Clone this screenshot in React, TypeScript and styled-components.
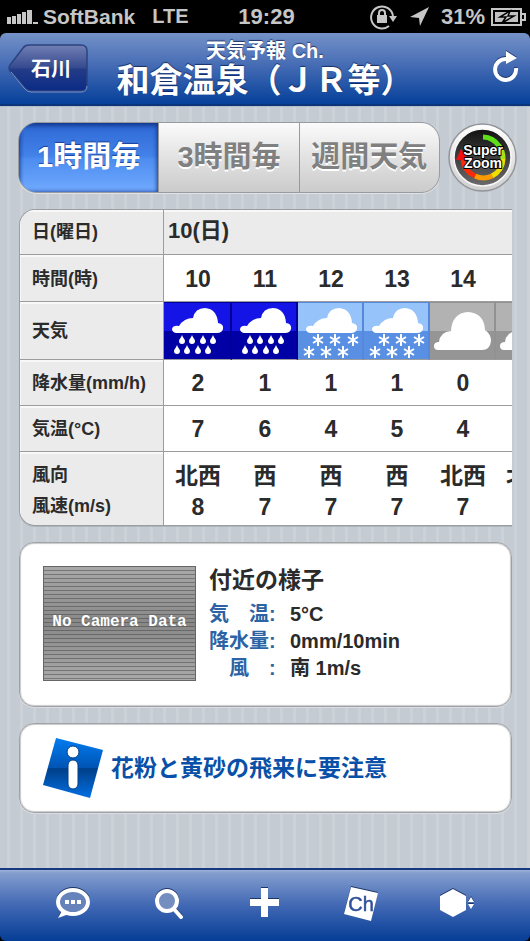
import React, { useState } from "react";
import styled, { createGlobalStyle, css } from "styled-components";

const sans = `"Liberation Sans", "Noto Sans CJK JP", sans-serif`;

const GlobalStyle = createGlobalStyle`
  *, *::before, *::after { box-sizing: border-box; }
  body { margin: 0; background: #000; font-family: ${sans}; color: #2b2b2b; }
  button { font: inherit; color: inherit; border: 0; background: none; padding: 0; cursor: pointer; }
  svg { display: block; }
`;

const Screen = styled.div`
  display: flex;
  flex-direction: column;
  min-height: 100vh;
`;

const StatusBar = styled.div`
  display: grid;
  grid-template-columns: 1fr auto 1fr;
  align-items: center;
  height: 33px;
  padding: 0 4px 0 7px;
  color: #c6c6c6;
  font-size: 22px;
  font-weight: 700;
  line-height: 33px;
`;

const StatusGroup = styled.div<{ $end?: boolean }>`
  display: flex;
  align-items: center;
  justify-content: ${(p) => (p.$end ? "flex-end" : "flex-start")};
`;

const Carrier = styled.span`
  margin: 0 17px 0 5px;
  font-size: 21px;
`;

const Network = styled.span`
  font-size: 20px;
`;

const Percent = styled.span`
  margin: 0 6px 0 12px;
`;

const Rotation = styled.div`
  margin-right: 13px;
`;

const Header = styled.header`
  display: grid;
  grid-template-columns: 80px 1fr 80px;
  align-items: center;
  height: 73px;
  padding: 0 8px;
  border-radius: 6px 6px 0 0;
  border-bottom: 2px solid #0c3478;
  background: linear-gradient(#7592c8, #4068b2 50%, #05409a);
  color: #fff;
  text-shadow: 0 -1px 1px rgba(0, 20, 70, 0.7);
`;

const BackButton = styled.button`
  position: relative;
  width: 80px;
  height: 49px;
  padding-left: 6px;
  font-size: 20px;
  font-weight: 700;
  line-height: 46px;

  svg {
    position: absolute;
    inset: 0;
  }
  span {
    position: relative;
  }
`;

const Titles = styled.div`
  text-align: center;
  white-space: nowrap;
`;

const Channel = styled.div`
  font-size: 20px;
  font-weight: 700;
  line-height: 24px;
`;

const Place = styled.h1`
  display: flex;
  justify-content: center;
  margin: 0;
  font-size: 33px;
  font-weight: 700;
  line-height: 36px;
`;

const RefreshButton = styled.button`
  justify-self: end;
  padding: 0 3px 5px 0;
  filter: drop-shadow(0 -1px 0 rgba(0, 20, 70, 0.6));
`;

const Content = styled.main`
  display: flex;
  flex: 1;
  flex-direction: column;
  gap: 16px;
  padding: 15px 18px 20px;
  border-top: 1px solid #b2bfca;
  background: repeating-linear-gradient(90deg, #c5cbd3 0 7px, #cdd2d9 7px 10px, #c5cbd3 10px 13px);
`;

const Controls = styled.div`
  display: flex;
  align-items: center;
  gap: 8px;
`;

const Segments = styled.div`
  display: flex;
  flex: 1;
  height: 71px;
  overflow: hidden;
  border: 1px solid #989ba0;
  border-radius: 19px;
  background: #999;
  box-shadow: 0 1px 0 #dfe3e8;
`;

const Segment = styled.button<{ $active: boolean }>`
  flex: 1;
  padding-bottom: 7px;
  font-size: 29px;
  font-weight: 700;
  white-space: nowrap;
  & + & {
    border-left: 1px solid #999;
  }
  ${(p) =>
    p.$active
      ? css`
          background: linear-gradient(#2d68d4, #4382e8 48%, #4d8df0 52%, #71aaff);
          box-shadow: inset 0 3px 5px rgba(10, 40, 120, 0.6), inset 0 0 4px rgba(10, 40, 120, 0.8);
          color: #fff;
          text-shadow: 0 -1px 1px rgba(10, 40, 120, 0.7);
        `
      : css`
          background: linear-gradient(#fbfbfb, #e2e2e2 50%, #cbcbcb);
          color: #808080;
          text-shadow: 0 2px 0 #fff;
        `}
`;

const ZoomButton = styled.button`
  width: 69px;
  height: 71px;
  margin-right: -5px;
`;

const TableFrame = styled.div`
  overflow-x: auto;
  overflow-y: hidden;
  scrollbar-width: none;
  margin-left: 1px;
  border: 1px solid #9b9ea1;
  border-right: 0;
  border-radius: 16px 0 0 16px;
  background: #fff;
  box-shadow: 0 1px 0 #b2b5b8;
`;

const Forecast = styled.table`
  width: 542px;
  table-layout: fixed;
  border-collapse: separate;
  border-spacing: 0;

  tr:not(:last-child) > * {
    border-bottom: 1px solid #9c9c9c;
  }
`;

const LabelColumn = styled.col`
  width: 144px;
`;

const HourColumn = styled.col<{ $first: boolean }>`
  width: ${(p) => (p.$first ? 68 : 66)}px;
`;

const Row = styled.tr<{ $height: number }>`
  height: ${(p) => p.$height}px;
`;

const RowLabel = styled.th<{ $top?: number }>`
  padding: ${(p) => p.$top ?? 2}px 0 0 12px;
  border-right: 1px solid #9c9c9c;
  background: #ebebeb;
  box-shadow: inset 1px 2px 0 #f8f8f8;
  font-size: 18px;
  font-weight: 700;
  line-height: 31px;
  text-align: left;
`;

const DateCell = styled.td`
  padding: 0 0 4px 4px;
  background: #ebebeb;
  box-shadow: inset 0 2px 0 #f8f8f8;
  font-size: 22px;
  font-weight: 700;
  line-height: 31px;
`;

const Cell = styled.td<{ $top?: number }>`
  padding: ${(p) => p.$top ?? 2}px 0 0;
  font-size: 23px;
  font-weight: 700;
  line-height: 31px;
  text-align: center;
  white-space: nowrap;
`;

const tones = {
  rain: ["#1414e6", "#0000a4", "#000098"],
  snow: ["#96c3fa", "#5a90e4", "#5588dc"],
  cloud: ["#b2b2b2", "#959595", "#929292"],
};

type Kind = keyof typeof tones;

const WeatherCell = styled.td<{ $kind: Kind }>`
  padding: 0;
  border-top: 1px solid ${(p) => tones[p.$kind][2]};
  border-right: 2px solid ${(p) => tones[p.$kind][2]};
  background: linear-gradient(
    ${(p) => tones[p.$kind][0]} 50%,
    ${(p) => tones[p.$kind][1]} 50%
  );
`;

const Card = styled.section<{ $info?: boolean }>`
  display: flex;
  align-items: ${(p) => (p.$info ? "center" : "flex-start")};
  gap: ${(p) => (p.$info ? 8 : 13)}px;
  min-height: ${(p) => (p.$info ? 90 : 165)}px;
  margin-left: 1px;
  padding: ${(p) => (p.$info ? "0 23px" : "23px")};
  border: 1px solid #9fa2a6;
  border-radius: 15px;
  background: #fff;
  box-shadow: 0 1px 0 #d9dde2, inset 0 0 1px 1px #c9c9c9;
`;

const Camera = styled.div`
  display: grid;
  flex: none;
  place-items: center;
  width: 153px;
  height: 115px;
  padding-bottom: 4px;
  border: 1px solid #666;
  background:
    linear-gradient(transparent 0%, rgba(60, 60, 60, 0.3) 50%, transparent 100%),
    repeating-linear-gradient(#a9a9a9 0 3px, #787878 3px 4px);
  color: #fff;
  font: 700 16px/20px "Liberation Mono", monospace;
  text-shadow: 0 0 2px #666;
`;

const Nearby = styled.div`
  padding-top: 1px;
  font-weight: 700;
`;

const NearbyTitle = styled.h2`
  margin: 0 0 7px;
  font-size: 23px;
  font-weight: 700;
  line-height: 27px;
`;

const Readings = styled.dl`
  display: grid;
  grid-template-columns: 81px auto;
  margin: 0;
  font-size: 20px;
  line-height: 27px;

  dt { color: #2b63a5; white-space: pre; }
  dd { margin: 0; }
`;

const NoticeLink = styled.a`
  color: #0850a8;
  font-size: 23px;
  font-weight: 700;
  line-height: 30px;
  text-decoration: none;
`;

const Toolbar = styled.nav`
  display: flex;
  height: 73px;
  padding: 0 25px 5px;
  border-top: 2px solid #16387f;
  border-radius: 0 0 6px 6px;
  background: linear-gradient(#9db2da 0, #839dce 3px, #4168b4 50%, #053d96);
`;

const ToolButton = styled.button`
  display: grid;
  flex: 1;
  place-items: center;

  svg {
    filter: drop-shadow(0 -1px 0 #1c3565);
  }
`;

const SignalIcon = () => (
  <svg width="31" height="14" viewBox="0 0 31 14" fill="#c6c6c6" aria-hidden="true">
    <path d="M0 7h4v7H0zM5 6h4v8H5zM10 4h4v10h-4zM15 2h4v12h-4zM20 0h5v14h-5zM26 12h5v2h-5z" />
  </svg>
);

const LockIcon = () => (
  <svg width="28" height="26" viewBox="0 0 28 26" fill="none" stroke="#c6c6c6" strokeWidth="2" aria-hidden="true">
    <path d="M20 22A11 11 0 1 1 24 12" />
    <path d="M20 12h8l-4 6z" fill="#c6c6c6" stroke="none" />
    <path d="M8 11h10v8H8z" fill="#c6c6c6" stroke="none" />
    <path d="M10 12V9a3 3 0 0 1 6 0v3" />
  </svg>
);

const LocationIcon = () => (
  <svg width="19" height="19" viewBox="0 0 19 19" fill="#c6c6c6" aria-hidden="true">
    <path d="M19 0 10 19 9 11 0 10z" />
  </svg>
);

const BatteryIcon = () => (
  <svg width="35" height="18" viewBox="0 0 35 18" aria-hidden="true">
    <path d="M1 1h29v16H1zM31 6h3v6h-3" fill="none" stroke="#c6c6c6" strokeWidth="2" />
    <path d="M4 4h23v10H4z" fill="#c0c0c0" />
    <path d="M19 3 9 9h6l-4 6 12-7h-6z" fill="#c6c6c6" stroke="#000" strokeWidth="1.500" />
  </svg>
);

const BackShape = () => (
  <svg width="80" height="49" viewBox="0 0 80 49" aria-hidden="true">
    <defs>
      <linearGradient id="back" x2="0" y2="1">
        <stop offset="0" stopColor="#717fb3" />
        <stop offset="0.5" stopColor="#34498f" />
        <stop offset="0.52" stopColor="#243c87" />
        <stop offset="1" stopColor="#0a2b85" />
      </linearGradient>
    </defs>
    <path
      d="M21 1H73q6 0 6 6V41q0 6-6 6H23q-4 0-7-4L2 27q-2-3 0-6L15 4q2-3 6-3z"
      fill="url(#back)"
      stroke="#2b4380"
      strokeWidth="1.5"
    />
    <path d="M3 28 16 44q3 4 7 4H73q6 0 6-6" fill="none" stroke="#7a93c7" />
  </svg>
);

const RefreshIcon = () => (
  <svg width="28" height="32" viewBox="0 0 28 32" aria-hidden="true">
    <path d="M16 9A10.500 10.500 0 1 0 25 18" fill="none" stroke="#fff" strokeWidth="4" />
    <path d="M15 1 26 8 15 14z" fill="#fff" />
  </svg>
);

const ZoomArt = styled.svg`
  font-family: ${sans};
  font-size: 14px;
  font-weight: 700;
`;

const SuperZoomIcon = () => (
  <ZoomArt width="69" height="71" viewBox="0 0 69 71">
    <defs>
      <linearGradient id="dial" x2="0" y2="1">
        <stop offset="0" stopColor="#111" />
        <stop offset="1" stopColor="#6b6b6b" />
      </linearGradient>
      <linearGradient id="ring" x2="0" y2="1">
        <stop offset="0" stopColor="#fff" />
        <stop offset="1" stopColor="#cecece" />
      </linearGradient>
    </defs>
    <circle cx="34.5" cy="35.5" r="33.5" fill="url(#ring)" stroke="#92959a" strokeWidth="1.5" />
    <circle cx="34.5" cy="35.5" r="28.5" fill="url(#dial)" stroke="#f7f7f7" strokeWidth="1.5" />
    <g fill="none" strokeWidth="5">
      <path d="M35 15A20 20 0 0 1 51 24" stroke="#5de01a" />
      <path d="M51 24A20 20 0 0 1 55 37" stroke="#a8e010" />
      <path d="M55 37A20 20 0 0 1 44 54" stroke="#f0dd00" />
      <path d="M44 54A20 20 0 0 1 27 54" stroke="#ff9a00" />
      <path d="M27 54A20 20 0 0 1 15 38" stroke="#fb2a08" />
    </g>
    <path d="M8 38 13 27 21 38z" fill="#f01010" />
    <g fill="#fff" stroke="#000" strokeWidth="2" paintOrder="stroke" textAnchor="middle">
      <text x="35" y="33">Super</text>
      <text x="35" y="46">Zoom</text>
    </g>
  </ZoomArt>
);

const Flake = ({ x, y }: { x: number; y: number }) => (
  <path
    d={`M${x} ${y - 6}v12M${x - 5} ${y - 3}l10 6M${x + 5} ${y - 3}l-10 6`}
    stroke="#fff"
    strokeWidth="2"
  />
);

const Drop = ({ x, y }: { x: number; y: number }) => (
  <path d={`M${x} ${y - 5}c1 3 3 4 3 6a3 3 0 0 1-6 0c0-2 2-3 3-6z`} fill="#fff" />
);

const WeatherIcon = ({ kind }: { kind: Kind }) => (
  <svg width="64" height="55" viewBox="0 0 64 55" role="img" aria-label={kind}>
    {kind === "cloud" ? (
      <path
        d="M8 46q-4 0-4-4t5-4q1-10 12-11Q22 9 38 8q16 1 17 18 6 4 6 11-1 9-9 9z"
        fill="#fff"
      />
    ) : (
      <path
        d="M12 29q-4-1-4-4 1-4 7-3 5-8 14-8Q31 4 41 4q12 1 13 15 6 1 5 6-1 4-6 4z"
        fill="#fff"
      />
    )}
    {kind === "rain" && (
      <>
        {[18, 28, 39, 49].map((x) => <Drop key={x} x={x} y={36} />)}
        {[13, 23, 34, 44].map((x) => <Drop key={x} x={x} y={46} />)}
      </>
    )}
    {kind === "snow" && (
      <>
        {[20, 37, 55].map((x) => <Flake key={x} x={x} y={36} />)}
        {[11, 28, 45].map((x) => <Flake key={x} x={x} y={48} />)}
      </>
    )}
  </svg>
);

const InfoIcon = () => (
  <svg width="60" height="60" viewBox="0 0 60 60" aria-hidden="true">
    <defs>
      <linearGradient id="info" x2="0" y2="1">
        <stop offset="0" stopColor="#007cf0" />
        <stop offset="0.5" stopColor="#0054b4" />
        <stop offset="0.51" stopColor="#003f88" />
        <stop offset="1" stopColor="#0070e4" />
      </linearGradient>
    </defs>
    <path d="M13 0 60 12 47 60 0 47z" fill="url(#info)" />
    <g fill="#fff" stroke="#003f88">
      <circle cx="30" cy="14" r="6" />
      <rect x="25" y="22" width="10" height="29" rx="5" />
    </g>
  </svg>
);

const CommentIcon = () => (
  <svg width="34" height="32" viewBox="0 0 34 32" aria-hidden="true">
    <path d="M7 22 2 31 13 27z" fill="#fff" />
    <ellipse cx="17" cy="15" rx="15" ry="12" fill="#6683bb" stroke="#fff" strokeWidth="4" />
    <path d="M9 13h4v4H9zM15 13h4v4h-4zM21 13h4v4h-4z" fill="#fff" />
  </svg>
);

const SearchIcon = () => (
  <svg width="30" height="31" viewBox="0 0 30 31" aria-hidden="true">
    <path d="m19 20 8 9" stroke="#fff" strokeWidth="4" strokeLinecap="round" />
    <circle cx="13" cy="13" r="10" fill="#748ebf" stroke="#fff" strokeWidth="4" />
  </svg>
);

const PlusIcon = () => (
  <svg width="30" height="30" viewBox="0 0 30 30" fill="#fff" aria-hidden="true">
    <path d="M11 0h7v11h11v7H18v11h-7V18H0v-7h11z" />
  </svg>
);

const ChannelArt = styled.svg`
  font-family: ${sans};
  font-size: 20px;
`;

const ChannelIcon = () => (
  <ChannelArt width="34" height="35" viewBox="0 0 34 35">
    <path d="M7 1 34 7 27 35 0 28z" fill="#fff" />
    <text x="17" y="25" fill="#2f509a" stroke="#2f509a" strokeWidth="0.5" textAnchor="middle">Ch</text>
  </ChannelArt>
);

const MoreIcon = () => (
  <svg width="34" height="28" viewBox="0 0 34 28" fill="#fff" aria-hidden="true">
    <path d="M13 0 26 7V21L13 28 0 21V7zM31 8l3 5h-6zM28 15h6l-3 5z" />
  </svg>
);

const tabs = ["1時間毎", "3時間毎", "週間天気"];

type Hour = { hour?: string; kind: Kind; rain?: string; temp?: string; wind: string; speed?: string };

const hours: Hour[] = [
  { hour: "10", kind: "rain", rain: "2", temp: "7", wind: "北西", speed: "8" },
  { hour: "11", kind: "rain", rain: "1", temp: "6", wind: "西", speed: "7" },
  { hour: "12", kind: "snow", rain: "1", temp: "4", wind: "西", speed: "7" },
  { hour: "13", kind: "snow", rain: "1", temp: "5", wind: "西", speed: "7" },
  { hour: "14", kind: "cloud", rain: "0", temp: "4", wind: "北西", speed: "7" },
  { kind: "cloud", wind: "北西" },
];

const tools = [
  { label: "コメント", icon: <CommentIcon /> },
  { label: "検索", icon: <SearchIcon /> },
  { label: "追加", icon: <PlusIcon /> },
  { label: "チャンネル", icon: <ChannelIcon /> },
  { label: "その他", icon: <MoreIcon /> },
];

export default function App() {
  const [tab, setTab] = useState(0);

  return (
    <Screen>
      <GlobalStyle />
      <StatusBar>
        <StatusGroup>
          <SignalIcon />
          <Carrier>SoftBank</Carrier>
          <Network>LTE</Network>
        </StatusGroup>
        <span>19:29</span>
        <StatusGroup $end>
          <Rotation>
            <LockIcon />
          </Rotation>
          <LocationIcon />
          <Percent>31%</Percent>
          <BatteryIcon />
        </StatusGroup>
      </StatusBar>

      <Header>
        <BackButton>
          <BackShape />
          <span>石川</span>
        </BackButton>
        <Titles>
          <Channel>天気予報 Ch.</Channel>
          <Place>和倉温泉（ＪＲ等）</Place>
        </Titles>
        <RefreshButton aria-label="更新">
          <RefreshIcon />
        </RefreshButton>
      </Header>

      <Content>
        <Controls>
          <Segments>
            {tabs.map((name, i) => (
              <Segment key={name} $active={i === tab} aria-pressed={i === tab} onClick={() => setTab(i)}>
                {name}
              </Segment>
            ))}
          </Segments>
          <ZoomButton>
            <SuperZoomIcon />
          </ZoomButton>
        </Controls>

        <TableFrame>
          <Forecast>
            <colgroup>
              <LabelColumn />
              {hours.map((_, i) => <HourColumn key={i} $first={i === 0} />)}
            </colgroup>
            <tbody>
              <Row $height={45}>
                <RowLabel scope="row" $top={0}>日(曜日)</RowLabel>
                <DateCell colSpan={hours.length}>10(日)</DateCell>
              </Row>
              <Row $height={47}>
                <RowLabel scope="row">時間(時)</RowLabel>
                {hours.map((h, i) => <Cell key={i}>{h.hour}</Cell>)}
              </Row>
              <Row $height={58}>
                <RowLabel scope="row">天気</RowLabel>
                {hours.map((h, i) => (
                  <WeatherCell key={i} $kind={h.kind}>
                    <WeatherIcon kind={h.kind} />
                  </WeatherCell>
                ))}
              </Row>
              <Row $height={46}>
                <RowLabel scope="row">降水量(mm/h)</RowLabel>
                {hours.map((h, i) => <Cell key={i}>{h.rain}</Cell>)}
              </Row>
              <Row $height={46}>
                <RowLabel scope="row">気温(°C)</RowLabel>
                {hours.map((h, i) => <Cell key={i}>{h.temp}</Cell>)}
              </Row>
              <Row $height={73}>
                <RowLabel scope="row" $top={4}>風向<br />風速(m/s)</RowLabel>
                {hours.map((h, i) => <Cell key={i} $top={6}>{h.wind}<br />{h.speed ?? "\u00a0"}</Cell>)}
              </Row>
            </tbody>
          </Forecast>
        </TableFrame>

        <Card>
          <Camera>No Camera Data</Camera>
          <Nearby>
            <NearbyTitle>付近の様子</NearbyTitle>
            <Readings>
              <dt>気　温:</dt>
              <dd>5°C</dd>
              <dt>降水量:</dt>
              <dd>0mm/10min</dd>
              <dt>　風　:</dt>
              <dd>南 1m/s</dd>
            </Readings>
          </Nearby>
        </Card>

        <Card $info>
          <InfoIcon />
          <NoticeLink href="#notice">花粉と黄砂の飛来に要注意</NoticeLink>
        </Card>
      </Content>

      <Toolbar>
        {tools.map((t) => (
          <ToolButton key={t.label} aria-label={t.label}>
            {t.icon}
          </ToolButton>
        ))}
      </Toolbar>
    </Screen>
  );
}
